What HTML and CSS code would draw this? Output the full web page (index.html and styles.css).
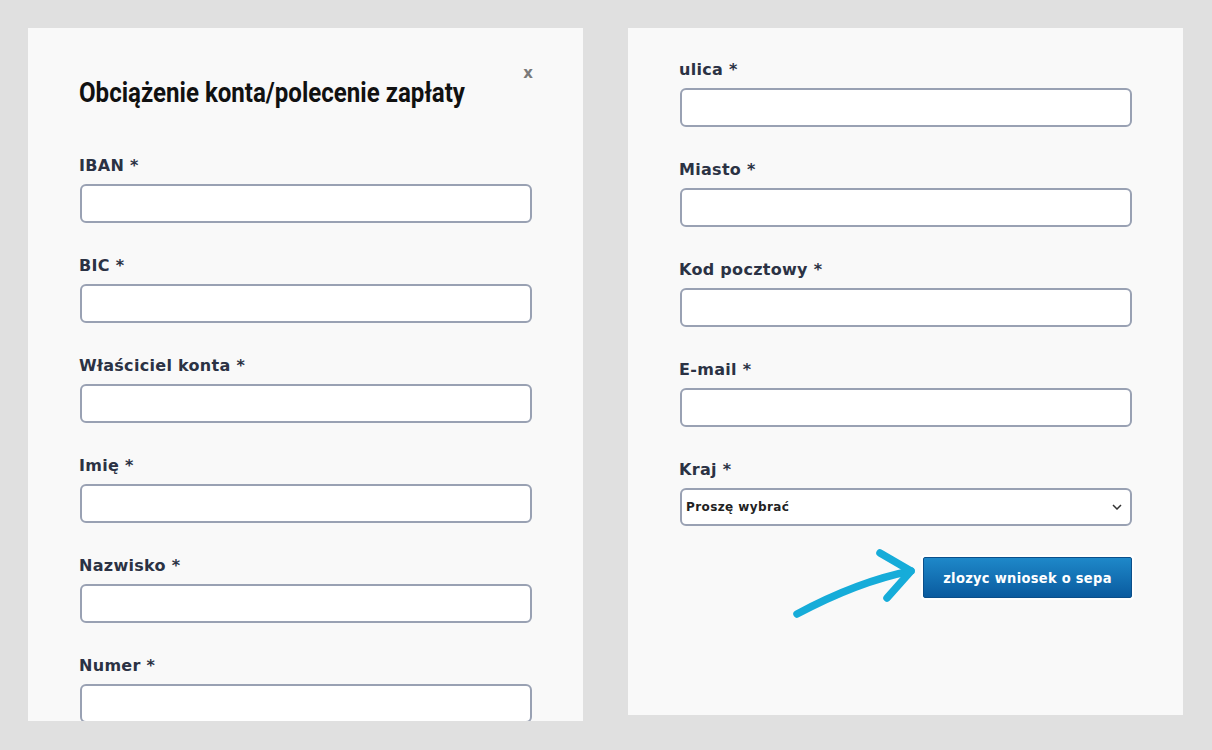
FILE: index.html
```html
<!DOCTYPE html>
<html lang="pl">
<head>
<meta charset="utf-8">
<title>SEPA</title>
<link rel="stylesheet" href="styles.css">
</head>
<body>
<div class="stage">
  <section class="panel panel-left">
    <button class="close" type="button">x</button>
    <h1 class="title"><span>Obciążenie konta/polecenie zapłaty</span></h1>
    <div class="field"><label>IBAN *</label><input type="text"></div>
    <div class="field"><label>BIC *</label><input type="text"></div>
    <div class="field"><label>Właściciel konta *</label><input type="text"></div>
    <div class="field"><label>Imię *</label><input type="text"></div>
    <div class="field"><label>Nazwisko *</label><input type="text"></div>
    <div class="field"><label>Numer *</label><input type="text"></div>
  </section>
  <section class="panel panel-right">
    <div class="field"><label>ulica *</label><input type="text"></div>
    <div class="field"><label>Miasto *</label><input type="text"></div>
    <div class="field"><label>Kod pocztowy *</label><input type="text"></div>
    <div class="field"><label>E-mail *</label><input type="text"></div>
    <div class="field field-select"><label>Kraj *</label>
      <div class="select"><span>Proszę wybrać</span>
        <svg class="chev" width="10" height="6" viewBox="0 0 10 6"><path d="M1 1l4 4 4-4" fill="none" stroke="#333" stroke-width="1.5"/></svg>
      </div>
    </div>
    <div class="actions">
      <svg class="arrow" width="135" height="80" viewBox="0 0 135 80">
        <path d="M12 73 C42 57 80 39 126 30" fill="none" stroke="#16acd9" stroke-width="7.5" stroke-linecap="round"/>
        <path d="M95 12 L126 30 L102 57" fill="none" stroke="#16acd9" stroke-width="7.5" stroke-linecap="round" stroke-linejoin="round"/>
      </svg>
      <button class="submit" type="button">zlozyc wniosek o sepa</button>
    </div>
  </section>
</div>
</body>
</html>
```
FILE: styles.css
```css
html, body { margin: 0; padding: 0; }
body {
  background: #e0e0e0;
  width: 1212px;
  height: 750px;
  overflow: hidden;
}
.stage {
  display: flex;
  gap: 45px;
  padding: 28px 0 0 28px;
  align-items: flex-start;
}
.panel {
  background: #f9f9f9;
  width: 555px;
  box-sizing: border-box;
  position: relative;
  overflow: hidden;
}
.panel-left {
  height: 693px;
  padding: 50px 51px 0 51px;
}
.panel-right {
  height: 687px;
  padding: 33px 51px 0 51px;
}
.close {
  position: absolute;
  top: 36px;
  right: 50px;
  border: 0;
  background: none;
  padding: 0;
  font: bold 15px "DejaVu Sans", sans-serif;
  color: #7a7a7a;
  cursor: pointer;
}
.title {
  margin: 0 0 49px 0;
  height: 30px;
  font: bold 28px/30px Roboto, sans-serif;
  color: #111;
  white-space: nowrap;
}
.title span {
  display: inline-block;
  transform: scaleX(0.86);
  transform-origin: left center;
}
.field {
  display: flex;
  flex-direction: column;
  margin-bottom: 34px;
}
.field label {
  display: block;
  font: bold 16px/18px "DejaVu Sans", Verdana, sans-serif;
  color: #2b3244;
  margin-bottom: 9px;
  letter-spacing: 0.3px;
}
.field input {
  box-sizing: border-box;
  width: 452px;
  height: 39px;
  margin: 0 0 0 1px;
  border: 2px solid #99a1b3;
  border-radius: 6px;
  background: #fff;
  outline: none;
}
.field-select { margin-bottom: 31px; }
.select {
  box-sizing: border-box;
  width: 452px;
  height: 38px;
  margin-left: 1px;
  border: 2px solid #99a1b3;
  border-radius: 6px;
  background: #fff;
  display: flex;
  align-items: center;
  justify-content: space-between;
  padding: 0 8px 0 4px;
  font: bold 12px "DejaVu Sans", Verdana, sans-serif;
  letter-spacing: 0.4px;
  color: #222;
}
.actions {
  position: relative;
  display: flex;
  justify-content: flex-end;
  width: 453px;
}
.submit {
  width: 209px;
  height: 41px;
  border: 1px solid #0b4f8a;
  border-radius: 2px;
  background: linear-gradient(#1e88c9, #0a5b9f);
  color: #fff;
  font: bold 14.5px "DejaVu Sans Condensed", "DejaVu Sans", sans-serif;
  letter-spacing: 0.3px;
  box-shadow: 0 0 0 2px #fff;
  padding: 0;
}
.arrow {
  position: absolute;
  left: 106px;
  top: -16px;
}
```
